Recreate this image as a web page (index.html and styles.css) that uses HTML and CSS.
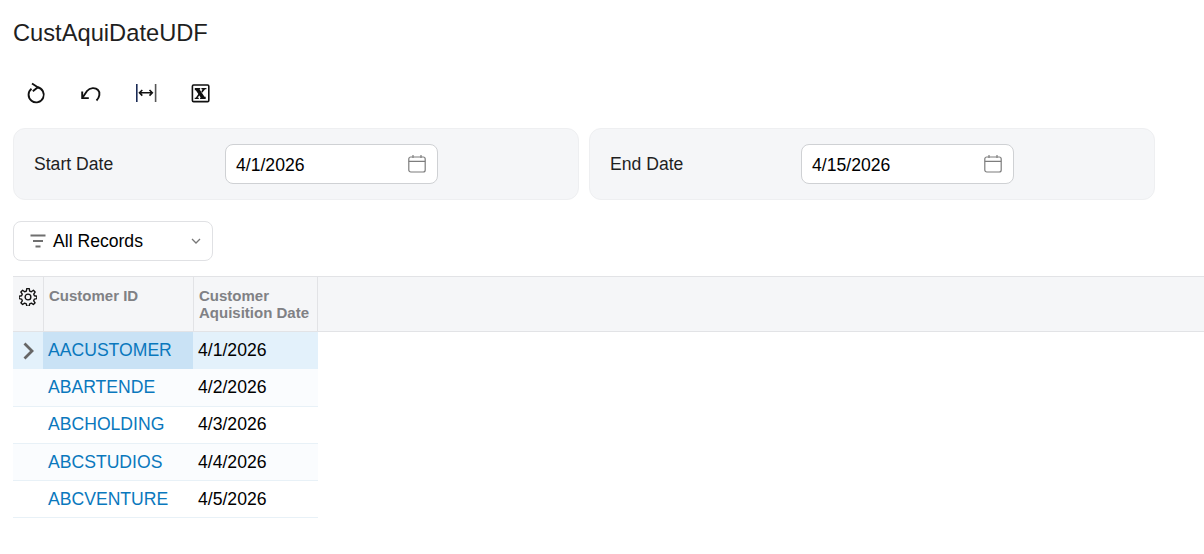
FILE: index.html
```html
<!DOCTYPE html>
<html lang="en">
<head>
<meta charset="utf-8">
<title>CustAquiDateUDF</title>
<link rel="stylesheet" href="styles.css">
</head>
<body>
<h1 class="title">CustAquiDateUDF</h1>
<div class="toolbar">
  <button class="tool"><svg width="24" height="24" viewBox="0 0 24 24" fill="none" stroke="#111" stroke-width="1.9"><path d="M13.500 6.300a7.600 7.600 0 1 1-6 1.500"/><path d="M8 2.500l5.800 3.800-5 4"/></svg></button>
  <button class="tool"><svg width="24" height="24" viewBox="0 0 24 24" fill="none" stroke="#111" stroke-width="1.9"><path d="M3.600 16.500L8 10c3-3.700 8.500-3.700 11-1 2.600 2.600 1.500 7.500-1.500 10.500"/><path d="M3.200 10.500v6.600h6.600"/></svg></button>
  <button class="tool"><svg width="24" height="24" viewBox="0 0 24 24" fill="none" stroke-width="1.600"><path d="M2.800 3v18" stroke="#1a2a55"/><path d="M21.600 3v18" stroke="#555"/><path d="M5.500 11.800h12.800M8.300 9l-2.800 2.800 2.800 2.800M15.500 9l2.800 2.800-2.800 2.800" stroke="#111"/></svg></button>
  <button class="tool"><svg width="24" height="24" viewBox="0 0 24 24" fill="none"><rect x="3.400" y="4" width="16.400" height="16.600" rx="1.200" stroke="#111" stroke-width="1.600"/><path d="M5.800 7h5.400v1.200h-.7l5 7.600h1.200V18h-5.600v-1.200h.7l-5-7.600H5.800z" fill="#111"/><path d="M12.400 7h5v1.200h-1.300l-2.900 3.600-.9-1.300 1.200-2.300h-1.100zM9.700 12.600l.9 1.300-2 2.900h1.200V18H5.700v-1.200h1.100z" fill="#111"/></svg></button>
</div>
<div class="filters">
  <section class="panel">
    <label class="field-label">Start Date</label>
    <div class="date-input"><span class="date-text">4/1/2026</span>
      <svg class="cal" width="20" height="20" viewBox="0 0 20 20" fill="none" stroke="#7d7d7d" stroke-width="1.200"><rect x="1.800" y="3" width="16.400" height="15" rx="2"/><path d="M1.800 7.400h16.400M6 1v3M14 1v3"/></svg>
    </div>
  </section>
  <section class="panel">
    <label class="field-label">End Date</label>
    <div class="date-input"><span class="date-text">4/15/2026</span>
      <svg class="cal" width="20" height="20" viewBox="0 0 20 20" fill="none" stroke="#7d7d7d" stroke-width="1.200"><rect x="1.800" y="3" width="16.400" height="15" rx="2"/><path d="M1.800 7.400h16.400M6 1v3M14 1v3"/></svg>
    </div>
  </section>
</div>
<div class="filter-select">
  <svg width="16" height="14" viewBox="0 0 16 14" fill="none" stroke="#6f6f6f" stroke-width="2"><path d="M0.500 1.500h15M3 7h10M5.500 12.500h5"/></svg>
  <span class="filter-text">All Records</span>
  <svg class="chev" width="10" height="6" viewBox="0 0 10 6" fill="none" stroke="#777" stroke-width="1.300"><path d="M1 1l4 4 4-4"/></svg>
</div>
<div class="grid">
  <div class="head">
    <div class="h-gear"><svg width="18" height="18" viewBox="-0.500 -0.500 25 25" fill="none" stroke="#111" stroke-width="1.900" stroke-linejoin="round"><circle cx="12" cy="12" r="4"/><path d="M10.300 1h3.400l.6 3.400 2.400 1 2.800-2 2.400 2.400-2 2.800 1 2.400 3.400.6v3.400l-3.400.6-1 2.400 2 2.800-2.400 2.400-2.800-2-2.400 1-.6 3.400h-3.400l-.6-3.400-2.400-1-2.800 2-2.400-2.400 2-2.800-1-2.400-3.400-.6v-3.400l3.400-.6 1-2.400-2-2.800 2.400-2.400 2.800 2 2.400-1z" transform="translate(0 -.7)"/></svg></div>
    <div class="h-cell h-id">Customer ID</div>
    <div class="h-cell h-date">Customer<br>Aquisition Date</div>
  </div>
  <div class="row selected">
    <div class="c-arrow"><svg width="12" height="18" viewBox="0 0 12 18" fill="none" stroke="#666" stroke-width="2.800"><path d="M2.500 1.500L10 9l-7.500 7.500"/></svg></div>
    <div class="c-id"><a>AACUSTOMER</a></div>
    <div class="c-date">4/1/2026</div>
  </div>
  <div class="row alt"><div class="c-arrow"></div><div class="c-id"><a>ABARTENDE</a></div><div class="c-date">4/2/2026</div></div>
  <div class="row"><div class="c-arrow"></div><div class="c-id"><a>ABCHOLDING</a></div><div class="c-date">4/3/2026</div></div>
  <div class="row alt"><div class="c-arrow"></div><div class="c-id"><a>ABCSTUDIOS</a></div><div class="c-date">4/4/2026</div></div>
  <div class="row"><div class="c-arrow"></div><div class="c-id"><a>ABCVENTURE</a></div><div class="c-date">4/5/2026</div></div>
</div>
</body>
</html>
```
FILE: styles.css
```css
* { box-sizing: border-box; }
html, body { margin: 0; padding: 0; background: #fff; overflow: hidden; }
body { padding: 0 0 0 13px; font-family: "Liberation Sans", Arial, sans-serif; color: #000; font-size: 17.6px; }
.title { margin: 0; padding-top: 19px; height: 74px; font-size: 23.7px; line-height: 28px; font-weight: 400; color: #1f1f1f; }
.toolbar { display: flex; gap: 31px; height: 54px; padding: 7px 0 0 11px; }
.tool { width: 24px; height: 24px; padding: 0; border: 0; background: none; display: flex; }
.filters { display: flex; gap: 10px; }
.panel { width: 566px; height: 72px; background: #f5f6f8; border: 1px solid #eeeff1; border-radius: 12px; display: flex; align-items: center; padding-left: 20px; }
.field-label { width: 191px; font-size: 17.6px; color: #1f1f1f; }
.date-input { width: 213px; height: 40px; background: #fff; border: 1px solid #cfd1d4; border-radius: 8px; display: flex; align-items: center; justify-content: space-between; padding: 0 10px; }
.date-text { padding-top: 2px; }
.filter-select { margin-top: 21px; width: 200px; height: 40px; background: #fff; border: 1px solid #e0e1e4; border-radius: 8px; display: flex; align-items: center; padding-left: 16px; }
.filter-text { margin-left: 7px; flex: 1; font-size: 17.6px; }
.chev { margin-right: 11px; }
.grid { margin-top: 15px; }
.head { display: flex; height: 56px; background: #f5f6f8; border-top: 1px solid #e2e3e6; border-bottom: 1px solid #e2e3e6; }
.h-gear { width: 31px; border-right: 1px solid #e2e3e6; padding: 11px 0 0 6px; }
.h-cell { font-weight: 700; font-size: 15px; line-height: 17px; color: #808185; padding: 10px 0 0 5px; border-right: 1px solid #e2e3e6; }
.h-id { width: 150px; }
.h-date { width: 124px; }
.row { display: flex; width: 305px; height: 37.3px; padding-top: 0.3px; border-bottom: 1px solid #e8f1f7; align-items: center; }
.row.alt { background: #fafcfe; }
.row.selected { background: #e3f1fb; border-bottom: 0; padding-top: 0; }
.c-arrow { width: 30px; display: flex; justify-content: center; }
.c-id { width: 150px; align-self: stretch; display: flex; align-items: center; padding-left: 5px; }
.selected .c-id { background: #c9e2f5; }
.c-id a { color: #0a78bd; }
.c-date { padding-left: 5px; }
```
